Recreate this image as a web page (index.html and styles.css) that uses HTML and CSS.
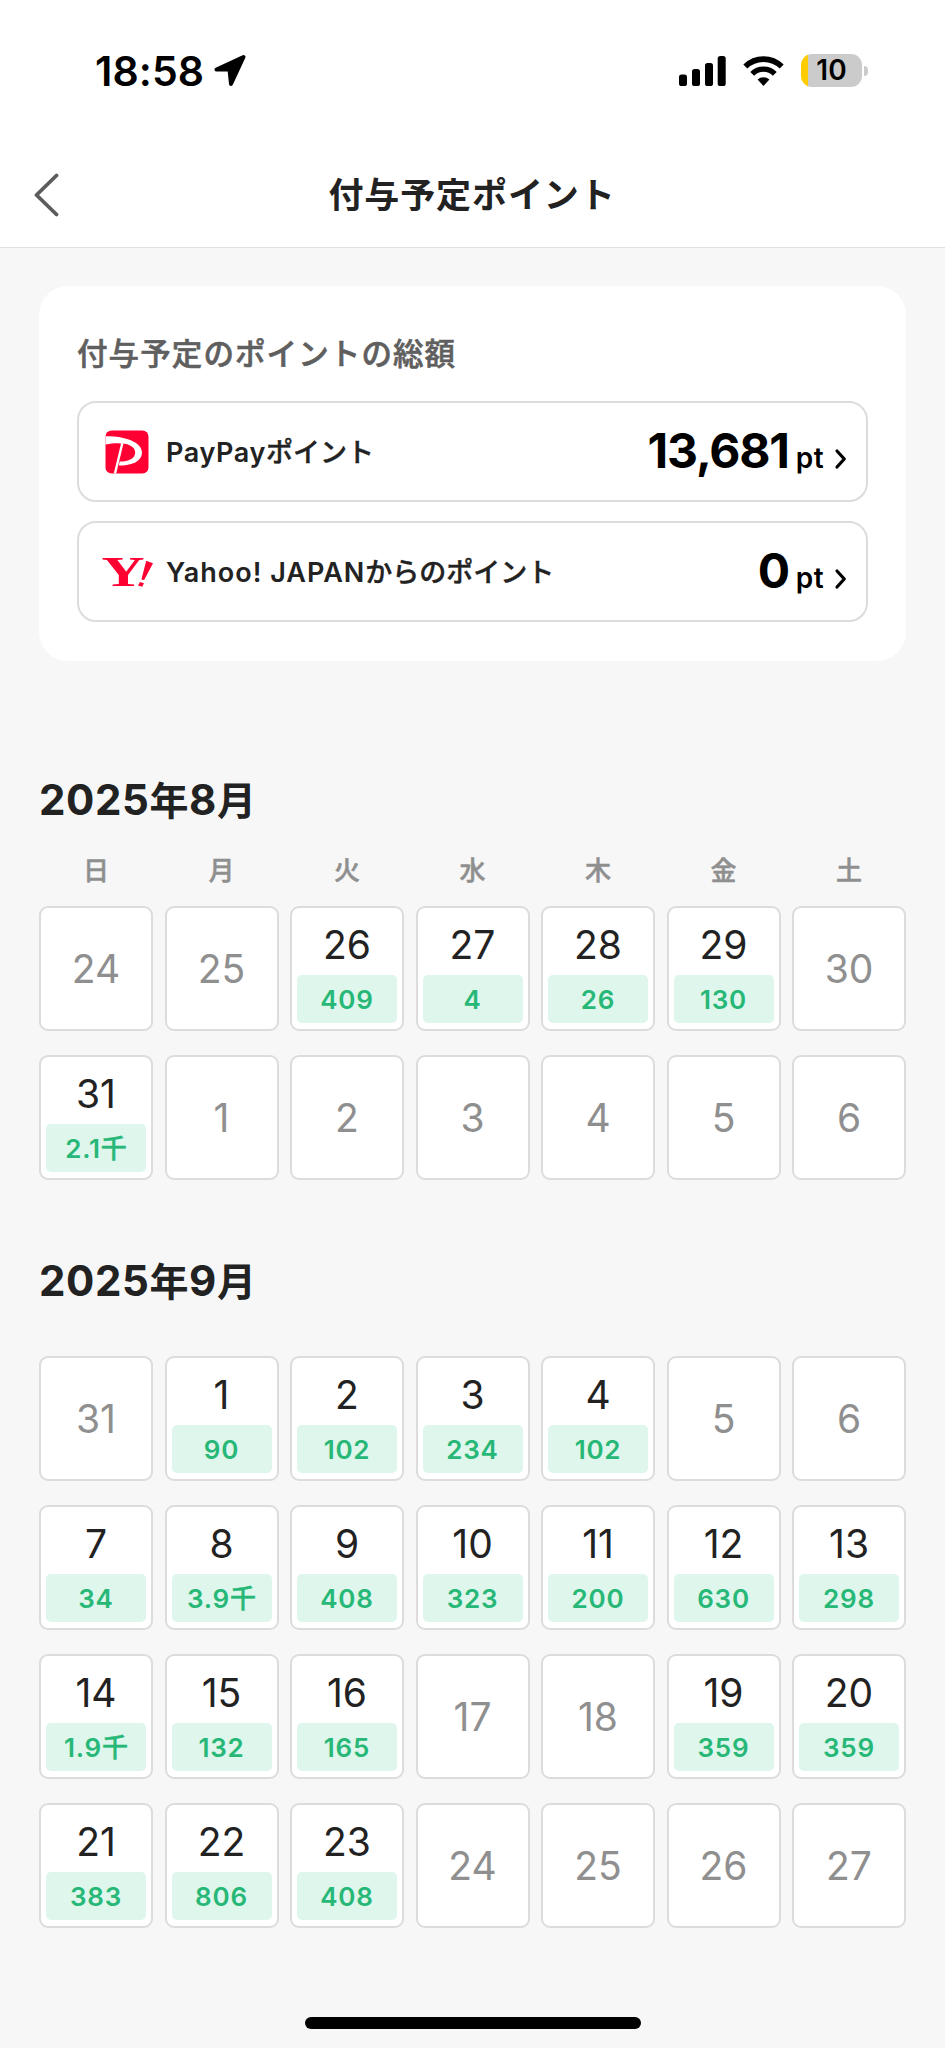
FILE: index.html
```
<!DOCTYPE html>
<html lang="ja">
<head>
<meta charset="utf-8">
<meta name="viewport" content="width=device-width,initial-scale=1.0">
<title>付与予定ポイント</title>
<link rel="stylesheet" href="styles.css">
</head>

<body>
<div class="page">
	<div class="status">
		<div class="status-left">
			<span class="time">18:58</span>
			<svg class="location" width="34" height="34" viewBox="0 0 34 34"><path d="M30.5 3 L3.5 15.6 H16.5 L18 30 Z" fill="#000" stroke="#000" stroke-width="4" stroke-linejoin="round"/></svg>
		</div>
		<div class="status-right">
			<svg class="signal" width="47" height="30" viewBox="0 0 47 30">
				<rect x="0" y="18.5" width="8" height="11.5" rx="2.6"/>
				<rect x="13" y="13" width="8" height="17" rx="2.6"/>
				<rect x="26" y="7" width="8" height="23" rx="2.6"/>
				<rect x="38.7" y="0" width="8" height="30" rx="2.6"/>
			</svg>
			<svg class="wifi" width="41" height="30" viewBox="0 0 41 30">
				<path d="M2.3 10.6 A26 26 0 0 1 38.7 10.6" fill="none" stroke="#000" stroke-width="5.6"/>
				<path d="M9.2 17.8 A16 16 0 0 1 31.8 17.8" fill="none" stroke="#000" stroke-width="5.4"/>
				<path d="M14.6 23.6 A8.6 8.6 0 0 1 26.4 23.6 L20.5 30 Z"/>
			</svg>
			<div class="battery"><span class="battery-num">10</span></div>
			<div class="battery-cap"></div>
		</div>
	</div>
	<div class="header">
		<svg class="back" width="25" height="44" viewBox="0 0 25 44"><path d="M22.5 2.5 L2.5 22 L22.5 41.5" fill="none" stroke="#5c5c5c" stroke-width="3.8" stroke-linecap="round" stroke-linejoin="round"/></svg>
		<h1 class="title">付与予定ポイント</h1>
	</div>

	<div class="main">
		<div class="card">
			<h2 class="card-title">付与予定のポイントの総額</h2>
			<div class="row">
				<svg class="logo" width="52" height="48" viewBox="0 -2 52 48">
					<rect x="4.5" y="0.5" width="43" height="43" rx="6" fill="#ff0033"/>
					<path d="M4.5 6.2 C24 6 41 12 41 22.5 C41 31.5 31 35.5 17.8 35.6 L18.7 31.6 C28 31.5 34.2 28.5 34.2 22.5 C34.2 14.5 22 11.2 4.5 14.4 Z" fill="#fff"/>
					<path d="M21.3 13.3 L14 43.5" fill="none" stroke="#fff" stroke-width="2.4"/>
				</svg>
				<span class="label">PayPay<span class="ja">ポイント</span></span>
				<span class="amount">13,681</span>
				<span class="unit">pt</span>
				<svg class="arrow" width="14" height="22" viewBox="0 0 14 22"><path d="M3 3 L10.3 11 L3 19" fill="none" stroke="#000" stroke-width="3.2" stroke-linecap="round" stroke-linejoin="round"/></svg>
			</div>
			<div class="row">
				<svg class="logo" width="52" height="48" viewBox="0 -2 52 48">
					<text class="logo-y" x="0.5" y="36" textLength="43" lengthAdjust="spacingAndGlyphs">Y</text>
					<path d="M45.2 10.8 L52 13.2 L43.2 30 L40.4 29.4 Z M39 32 L43 33.2 L41.2 36.8 L37 35.6 Z" fill="#ff0033"/>
				</svg>
				<span class="label label-yahoo">Yahoo! JAPAN<span class="ja">からのポイント</span></span>
				<span class="amount">0</span>
				<span class="unit">pt</span>
				<svg class="arrow" width="14" height="22" viewBox="0 0 14 22"><path d="M3 3 L10.3 11 L3 19" fill="none" stroke="#000" stroke-width="3.2" stroke-linecap="round" stroke-linejoin="round"/></svg>
			</div>
		</div>

		<h2 class="month">2025<span class="kanji">年</span>8<span class="kanji">月</span></h2>
		<div class="week">
			<span>日</span><span>月</span><span>火</span><span>水</span><span>木</span><span>金</span><span>土</span>
		</div>
		<div class="calendar">
			<div class="day off">24</div>
			<div class="day off">25</div>
			<div class="day"><span class="date">26</span><span class="point">409</span></div>
			<div class="day"><span class="date">27</span><span class="point">4</span></div>
			<div class="day"><span class="date">28</span><span class="point">26</span></div>
			<div class="day"><span class="date">29</span><span class="point">130</span></div>
			<div class="day off">30</div>

			<div class="day"><span class="date">31</span><span class="point">2.1<span class="ja">千</span></span></div>
			<div class="day off">1</div>
			<div class="day off">2</div>
			<div class="day off">3</div>
			<div class="day off">4</div>
			<div class="day off">5</div>
			<div class="day off">6</div>
		</div>

		<h2 class="month month-next">2025<span class="kanji">年</span>9<span class="kanji">月</span></h2>
		<div class="calendar">
			<div class="day off">31</div>
			<div class="day"><span class="date">1</span><span class="point">90</span></div>
			<div class="day"><span class="date">2</span><span class="point">102</span></div>
			<div class="day"><span class="date">3</span><span class="point">234</span></div>
			<div class="day"><span class="date">4</span><span class="point">102</span></div>
			<div class="day off">5</div>
			<div class="day off">6</div>

			<div class="day"><span class="date">7</span><span class="point">34</span></div>
			<div class="day"><span class="date">8</span><span class="point">3.9<span class="ja">千</span></span></div>
			<div class="day"><span class="date">9</span><span class="point">408</span></div>
			<div class="day"><span class="date">10</span><span class="point">323</span></div>
			<div class="day"><span class="date">11</span><span class="point">200</span></div>
			<div class="day"><span class="date">12</span><span class="point">630</span></div>
			<div class="day"><span class="date">13</span><span class="point">298</span></div>

			<div class="day"><span class="date">14</span><span class="point">1.9<span class="ja">千</span></span></div>
			<div class="day"><span class="date">15</span><span class="point">132</span></div>
			<div class="day"><span class="date">16</span><span class="point">165</span></div>
			<div class="day off">17</div>
			<div class="day off">18</div>
			<div class="day"><span class="date">19</span><span class="point">359</span></div>
			<div class="day"><span class="date">20</span><span class="point">359</span></div>

			<div class="day"><span class="date">21</span><span class="point">383</span></div>
			<div class="day"><span class="date">22</span><span class="point">806</span></div>
			<div class="day"><span class="date">23</span><span class="point">408</span></div>
			<div class="day off">24</div>
			<div class="day off">25</div>
			<div class="day off">26</div>
			<div class="day off">27</div>
		</div>
	</div>
	<div class="home-bar"></div>
</div>
</body>

</html>
```
FILE: styles.css
```
*,*:before,*:after{
	padding: 0;
	margin: 0;
	box-sizing: border-box;
}
body{
	background-color: #f7f7f7;
	color: #222;
	font-family: Inter, "Noto Sans CJK JP", sans-serif;
}
.page{
	display: flex;
	flex-direction: column;
	width: 945px;
	height: 2048px;
	overflow: hidden;
}
svg{
	display: block;
	flex: none;
}
.ja{
	font-weight: 500;
	letter-spacing: 0;
	-webkit-text-stroke: 0.4px;
}

/* status bar */
.status{
	display: flex;
	justify-content: space-between;
	height: 142px;
	padding: 54px 77px 0 95px;
	background-color: #fff;
	color: #000;
}
.status-left,
.status-right{
	display: flex;
	align-items: center;
	height: 33px;
}
.time{
	font-size: 41px;
	font-weight: 600;
	line-height: 34px;
	letter-spacing: 0.1px;
}
.location{
	margin-left: 9px;
}
.wifi{
	margin-left: 17px;
}
.battery{
	display: flex;
	align-items: center;
	justify-content: center;
	width: 61px;
	height: 33px;
	margin-left: 17px;
	border-radius: 11px;
	background: linear-gradient(to right, #ffcc00 7px, #cbcbcb 7px);
}
.battery-num{
	font-size: 28px;
	font-weight: 600;
	line-height: 33px;
}
.battery-cap{
	width: 4px;
	height: 10px;
	margin-left: 2px;
	border-radius: 0 4px 4px 0;
	background-color: #cbcbcb;
}

/* header */
.header{
	display: flex;
	align-items: center;
	height: 106px;
	padding-left: 34px;
	border-bottom: 1px solid #e0e0e0;
	background-color: #fff;
}
.title{
	flex: 1;
	height: 54px;
	margin-right: 60px;
	font-size: 35px;
	font-weight: 600;
	line-height: 54px;
	letter-spacing: 0.9px;
	text-align: center;
}

.main{
	flex: 1;
	padding: 38px 39px 0;
}

/* total */
.card{
	height: 375px;
	padding: 46px 38px 0;
	border-radius: 29px;
	background-color: #fff;
}
.card-title{
	height: 44px;
	margin-bottom: 25px;
	font-size: 30.5px;
	font-weight: 500;
	line-height: 44px;
	letter-spacing: 1.1px;
	color: #5f5f5f;
	-webkit-text-stroke: 0.6px;
}
.row{
	display: flex;
	align-items: center;
	height: 101px;
	margin-bottom: 19px;
	padding: 0 18px 0 22px;
	border: 2px solid #dcdcdc;
	border-radius: 19px;
}
.logo{
	margin-right: 13px;
}
.logo-y{
	font-family: "Liberation Serif", serif;
	font-size: 42px;
	font-weight: 700;
	fill: #ff0033;
}
.label{
	flex: 1;
	height: 40px;
	font-size: 27px;
	font-weight: 600;
	line-height: 41px;
	letter-spacing: 0.6px;
	white-space: nowrap;
}
.label-yahoo{
	letter-spacing: 1px;
}
.amount{
	height: 60px;
	font-size: 48px;
	font-weight: 700;
	line-height: 58px;
	letter-spacing: -1.2px;
	color: #000;
}
.unit{
	height: 60px;
	margin-left: 7px;
	font-size: 28px;
	font-weight: 600;
	line-height: 73px;
	letter-spacing: 0.4px;
	color: #000;
}
.arrow{
	margin: 15px 0 0 10px;
}

/* calendar */
.month{
	height: 60px;
	margin-top: 109px;
	font-size: 42px;
	font-weight: 700;
	line-height: 60px;
	letter-spacing: 0.6px;
}
.kanji{
	font-size: 39px;
}
.month-next{
	margin: 71px 0 45px;
}
.week{
	display: grid;
	grid-template-columns: repeat(7, 1fr);
	column-gap: 11.5px;
	height: 76px;
	padding-top: 20px;
	font-size: 26px;
	font-weight: 500;
	line-height: 41px;
	text-align: center;
	color: #8f8f8f;
	-webkit-text-stroke: 0.5px;
}
.calendar{
	display: grid;
	grid-template-columns: repeat(7, 1fr);
	gap: 24px 11.5px;
}
.day{
	display: flex;
	flex-direction: column;
	height: 125px;
	padding: 0 5px;
	border: 2px solid #dcdcdc;
	border-radius: 9px;
	background-color: #fff;
	text-align: center;
}
.date{
	height: 67px;
	font-size: 39px;
	line-height: 74px;
}
.off{
	font-size: 39px;
	line-height: 122px;
	color: #8f8f8f;
}
.point{
	height: 48px;
	border-radius: 5px;
	background-color: #def6eb;
	font-size: 26px;
	font-weight: 600;
	line-height: 49px;
	letter-spacing: 0.8px;
	color: #27b878;
}

.home-bar{
	width: 336px;
	height: 12px;
	margin: 0 auto 19px;
	border-radius: 6px;
	background-color: #000;
}
```
